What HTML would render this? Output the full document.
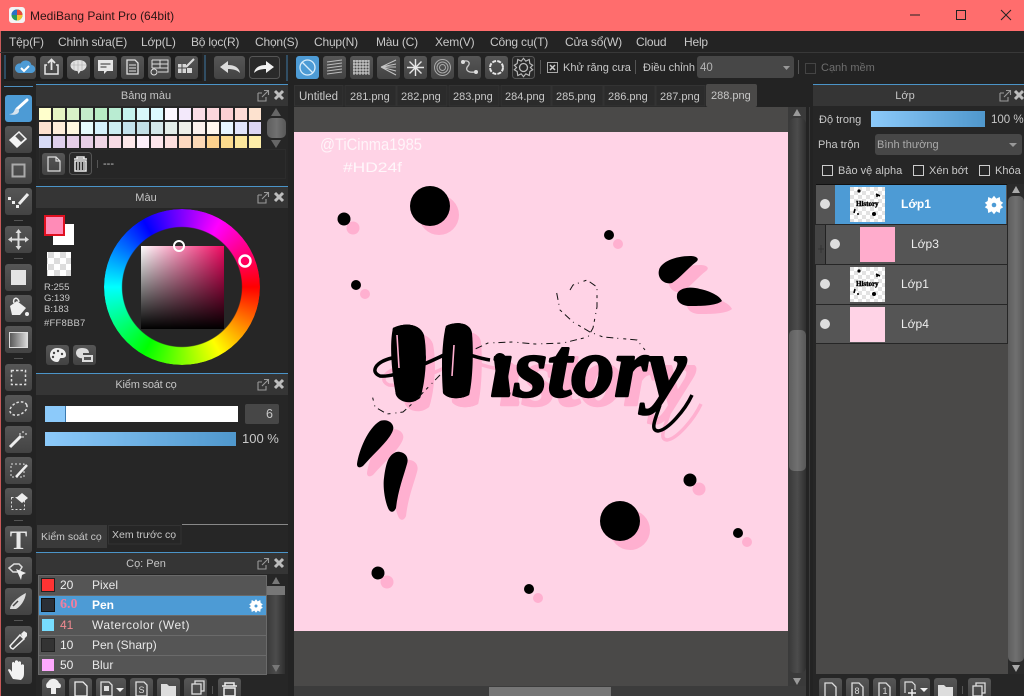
<!DOCTYPE html>
<html><head><meta charset="utf-8"><style>
html,body{margin:0;padding:0;background:#232323}
#w{position:relative;width:1024px;height:696px;overflow:hidden;background:#232323;font-family:"Liberation Sans","Noto Sans CJK SC",sans-serif;font-size:12px;color:#c8c8c8}
.a{position:absolute}
.t{position:absolute;white-space:nowrap;line-height:16px}
.m{letter-spacing:-.2px}
.h{position:absolute;background:#353535;border-top:1px solid #4b94c8;height:21px}
.c{position:absolute;white-space:nowrap;line-height:16px;transform:translateX(-50%);color:#c4c4c4;font-size:11px}
#ic{position:absolute;left:0;top:0}
</style></head><body><div id="w">
<div class="a" style="left:0;top:0;width:1024px;height:31px;background:#ff6d6d"></div>
<div class="a" style="left:0;top:31px;width:1px;height:665px;background:#c85a5a"></div>
<div class="a" style="left:0;top:52px;width:1024px;height:1px;background:#383838"></div>
<div class="a" style="left:4px;top:53px;width:198px;height:28px;background:#1d1d1d"></div>
<div class="a" style="left:36px;top:84px;width:252px;height:612px;background:#262626"></div>
<div class="a" style="left:294px;top:107px;width:512px;height:589px;background:#4a4948"></div>
<div class="a" style="left:813px;top:84px;width:211px;height:612px;background:#262626"></div>
<div class="a" style="left:816px;top:344px;width:192px;height:330px;background:#4a4948"></div>
<div class="a" style="left:294px;top:132px;width:494px;height:499px;background:#ffd3e6"></div>

<div class="h" style="left:36px;top:84px;width:252px"></div>
<div class="h" style="left:36px;top:186px;width:252px"></div>
<div class="h" style="left:36px;top:373px;width:252px"></div>
<div class="h" style="left:36px;top:552px;width:252px"></div>
<div class="h" style="left:813px;top:84px;width:211px"></div>

<div class="a" style="left:104px;top:209px;width:156px;height:156px;border-radius:50%;background:conic-gradient(from 90deg,#f00,#ff0,#0f0,#0ff,#00f,#f0f,#f00);-webkit-mask:radial-gradient(circle,transparent 59.5px,#000 60.5px);mask:radial-gradient(circle,transparent 59.5px,#000 60.5px)"></div>
<div class="a" style="left:141px;top:246px;width:83px;height:83px;background:linear-gradient(to top,#000,rgba(0,0,0,0)),linear-gradient(to right,#fff,#f00a62)"></div>
<div class="a" style="left:173px;top:240px;width:8px;height:8px;border:2px solid #fff;border-radius:50%"></div>

<svg id="ic" width="1024" height="696" viewBox="0 0 1024 696" xmlns="http://www.w3.org/2000/svg" font-family="Liberation Sans">
<defs>
<linearGradient id="b" x1="0" y1="0" x2="0" y2="1"><stop offset="0" stop-color="#565656"/><stop offset="1" stop-color="#434343"/></linearGradient>
<linearGradient id="bl" x1="0" y1="0" x2="1" y2="0"><stop offset="0" stop-color="#8ccafa"/><stop offset="1" stop-color="#4f97cc"/></linearGradient>
<linearGradient id="sb" x1="0" y1="0" x2="1" y2="0"><stop offset="0" stop-color="#3a3a3a"/><stop offset=".5" stop-color="#4c4c4c"/><stop offset="1" stop-color="#2e2e2e"/></linearGradient>
<linearGradient id="th" x1="0" y1="0" x2="1" y2="0"><stop offset="0" stop-color="#5e5e5e"/><stop offset=".5" stop-color="#707070"/><stop offset="1" stop-color="#585858"/></linearGradient>
<linearGradient id="gr" x1="0" y1="0" x2="1" y2="0"><stop offset="0" stop-color="#555"/><stop offset="1" stop-color="#ddd"/></linearGradient>
<pattern id="ck" width="12" height="12" patternUnits="userSpaceOnUse"><rect width="12" height="12" fill="#fff"/><rect width="6" height="6" fill="#dcdcdc"/><rect x="6" y="6" width="6" height="6" fill="#dcdcdc"/></pattern>
<pattern id="ck2" width="8" height="8" patternUnits="userSpaceOnUse"><rect width="8" height="8" fill="#fff"/><rect width="4" height="4" fill="#e2e2e2"/><rect x="4" y="4" width="4" height="4" fill="#e2e2e2"/></pattern>
<g id="pop"><path d="M0 3H4M0 3V11H8V7" fill="none" stroke="#9a9a9a" stroke-width="1.100"/><path d="M4 7L10 1M6 0.500H10.500V5" fill="none" stroke="#9a9a9a" stroke-width="1.100"/></g>
<g id="cl"><path d="M1 1L9 9M9 1L1 9" stroke="#bdbdbd" stroke-width="3"/></g>
<g id="th1"><rect width="35" height="35" fill="url(#ck2)"/><circle cx="9" cy="4" r="1.600"/><circle cx="24" cy="27" r="2"/><circle cx="27" cy="9" r="1"/><circle cx="8" cy="27" r="1"/><text x="6" y="19" font-family="Liberation Serif" font-size="7" font-weight="bold" stroke="#000" stroke-width=".4">History</text><path d="M26 7l4 2M5 22l-1 4" stroke="#000" stroke-width="1.600"/></g>
<path id="gear" d="M0-8 2-5.500 5-7 5.500-3.500 8-2 6 0 8 2 5.500 3.500 5 7 2 5.500 0 8-2 5.500-5 7-5.500 3.500-8 2-6 0-8-2-5.500-3.500-5-7-2-5.500Z"/>
<clipPath id="hc"><path d="M393 328C405 322 420 324 424 335 428 355 425 385 420 398 412 405 400 403 396 395 392 375 389 345 393 328Z"/><path d="M446 326C455 321 470 322 472 333 474 355 472 385 469 395 460 400 447 399 443 393 441 370 442 340 446 326Z"/></clipPath>
<clipPath id="ic2"><path d="M520 300H710V450H480V351H520Z"/></clipPath>
<g id="hist">
<g clip-path="url(#hc)"><text x="388" y="398" font-family="Liberation Serif" font-weight="bold" font-size="112" stroke-width="3" stroke-linejoin="round">H</text></g>
<path d="M393 328C405 322 420 324 424 335 428 355 425 385 420 398 412 405 400 403 396 395 392 375 389 345 393 328Z" stroke="none"/>
<path d="M446 326C455 321 470 322 472 333 474 355 472 385 469 395 460 400 447 399 443 393 441 370 442 340 446 326Z" stroke="none"/>
<g clip-path="url(#ic2)"><text x="490" y="396" font-family="Liberation Serif" font-weight="bold" font-style="italic" font-size="85" stroke-width="2.500" stroke-linejoin="round" textLength="196" lengthAdjust="spacingAndGlyphs">istory</text></g>
<path d="M500 359L504 391" fill="none" stroke-width="12" stroke-linecap="round"/>
<path d="M392 358C375 362 370 372 380 376 395 378 430 362 450 352 460 350 475 358 490 360M660 405C655 420 650 430 658 431 668 430 685 410 692 395" fill="none" stroke-width="3.500"/>
</g>
<path id="s1" d="M357 464C359 450 368 428 380 421 388 418 395 424 393 430 390 440 375 452 363 466 360 468 357 468 357 464Z"/>
<path id="s2" d="M388 460C391 454 396 451 400 452 406 453 409 458 407 464 404 475 398 490 396 508 394 513 390 513 388 508 384 498 383 485 384 478 385 470 386 465 388 460Z"/>
<path id="s3" d="M659 270C661 262 675 256 690 256 697 256 700 259 696 262 688 268 680 278 672 283 664 285 657 278 659 270Z"/>
<path id="s4" d="M677 295C678 288 690 286 700 289 710 291 720 296 722 301 716 306 700 306 690 306 682 306 676 302 677 295Z"/>
</defs>

<!-- title -->
<rect x="9" y="7" width="16" height="16" rx="3" fill="#f4f4f4"/><circle cx="17" cy="15" r="5.500" fill="#2a9a5a"/><path d="M17 9.500A5.500 5.500 0 0 1 22.500 15L17 15Z" fill="#e84a3a"/><path d="M17 15L22.500 15A5.500 5.500 0 0 1 17 20.500Z" fill="#f2c230"/><path d="M17 15V9.500A5.500 5.500 0 0 0 11.500 15Z" fill="#2a70c8"/>
<path d="M910 15H920" stroke="#222" stroke-width="1"/><rect x="956.500" y="10.500" width="9" height="9" fill="none" stroke="#222"/><path d="M1001 10L1011 20M1011 10L1001 20" stroke="#222"/>

<!-- toolbar buttons -->
<g fill="url(#b)">
<rect x="13" y="56" width="23" height="23" rx="3"/><rect x="40" y="56" width="23" height="23" rx="3"/><rect x="67" y="56" width="23" height="23" rx="3"/><rect x="94" y="56" width="23" height="23" rx="3"/><rect x="121" y="56" width="23" height="23" rx="3"/><rect x="148" y="56" width="23" height="23" rx="3"/><rect x="175" y="56" width="23" height="23" rx="3"/>
<rect x="214" y="56" width="31" height="23" rx="3"/>
<rect x="323" y="56" width="23" height="23" rx="3"/><rect x="350" y="56" width="23" height="23" rx="3"/><rect x="377" y="56" width="23" height="23" rx="3"/><rect x="404" y="56" width="23" height="23" rx="3"/><rect x="431" y="56" width="23" height="23" rx="3"/><rect x="458" y="56" width="23" height="23" rx="3"/><rect x="485" y="56" width="23" height="23" rx="3"/>
</g>
<rect x="697" y="56" width="97" height="22" rx="3" fill="#474747"/>
<rect x="249.500" y="56.500" width="30" height="22" rx="3" fill="#2a2a2a" stroke="#555"/>
<rect x="512.500" y="56.500" width="22" height="22" rx="3" fill="#2a2a2a" stroke="#555"/>
<rect x="296" y="56" width="23" height="23" rx="3" fill="#4d9bd5"/>
<path d="M5 55V79M205 55V81M287 55V81" stroke="#3f7aa5" stroke-width="1"/>
<path d="M540.500 60V74M635.500 60V74M798.500 60V74" stroke="#555"/>
<!-- cloud -->
<path d="M19 73H31a4 4 0 0 0 .5-8 6 6 0 0 0-11-1.500A4.800 4.800 0 0 0 19 73Z" fill="#4d9bd5"/><path d="M21 68l3 3 5-5" fill="none" stroke="#fff" stroke-width="2"/>
<!-- share -->
<path d="M47 65H45V74H58V65H56" fill="none" stroke="#e6e6e6" stroke-width="1.500"/><path d="M51.500 70V60M48 63l3.500-3.500L55 63" fill="none" stroke="#e6e6e6" stroke-width="1.800"/>
<!-- bubble -->
<path d="M78.500 60c5.500 0 8 2.500 8 5.500 0 3-3 5.500-6 5.500l-2 3-1-3c-4 0-7-2.500-7-5.500 0-3 3-5.500 8-5.500Z" fill="#e2e2e2"/><path d="M74 62v8M78 60v11M82 61v9M71 65h15" stroke="#aaa" stroke-width=".6"/>
<path d="M98 60H113V71H107L104 74V71H98Z" fill="#e6e6e6"/><path d="M100.500 64H110.500M100.500 67H106.500" stroke="#555" stroke-width="1.300"/>
<path d="M127 60H135L138 63V74H127Z" fill="none" stroke="#e2e2e2" stroke-width="1.300"/><path d="M129 65H136M129 68H136M129 71H136" stroke="#e2e2e2"/>
<path d="M152 60H168V72H158M152 60V68M152 64H168M152 68H168M160 60V68" fill="none" stroke="#ddd"/><circle cx="154" cy="72" r="3" fill="none" stroke="#ddd"/>
<path d="M178 64H186V73H178ZM187 68H192V73H187Z" fill="#d6d6d6"/><path d="M178 68H186M182 64V73" stroke="#444"/><path d="M186 67L194 59" stroke="#ddd" stroke-width="2"/>
<!-- undo redo -->
<path d="M220 67l8-6v4c6 0 11 2 12 8-3-3-7-4-12-4v4Z" fill="#ddd"/><path d="M274 67l-8-6v4c-6 0-11 2-12 8 3-3 7-4 12-4v4Z" fill="#f2f2f2"/>
<!-- snap icons -->
<circle cx="307.500" cy="67.500" r="7.500" fill="none" stroke="#d8ecfa" stroke-width="1.300"/><path d="M302 62L313 73" stroke="#d8ecfa" stroke-width="1.300"/>
<path d="M327 62l15-2M327 65l15-2M327 68l15-2M327 71l15-2M327 74l15-2" stroke="#bbb" stroke-width="1.100"/>
<path d="M354 60v15M357 60v15M360 60v15M363 60v15M366 60v15M369 60v15M353 61h16M353 64h16M353 67h16M353 70h16M353 73h16" stroke="#ddd" stroke-width=".9"/>
<path d="M381 67L396 60M381 67L396 64M381 67H396M381 67L396 71M381 67L396 75" stroke="#c4c4c4"/>
<path d="M415.500 59v17M407 67.500h17M409.500 61.500l12 12M421.500 61.500l-12 12" stroke="#e6e6e6" stroke-width="1.400"/>
<circle cx="442.500" cy="67.500" r="8" fill="none" stroke="#aaa"/><circle cx="442.500" cy="67.500" r="5.500" fill="none" stroke="#aaa"/><circle cx="442.500" cy="67.500" r="3" fill="none" stroke="#aaa"/>
<path d="M462 62c6-3 9 1 6 4-2 2-2 5 2 6 2 .5 4 0 6 0" fill="none" stroke="#ccc" stroke-width="1.300"/><circle cx="463" cy="62" r="2" fill="#ddd"/><circle cx="476" cy="72" r="2" fill="#ddd"/>
<circle cx="496.500" cy="67.500" r="6.500" fill="none" stroke="#e6e6e6" stroke-width="2" stroke-dasharray="4 1.200"/>
<circle cx="523.500" cy="67.500" r="4" fill="none" stroke="#bbb" stroke-width="1.300"/><use href="#gear" transform="translate(523.500 67.500) scale(1.150)" fill="none" stroke="#bbb"/>
<rect x="547.500" y="62.500" width="10" height="10" fill="none" stroke="#aaa"/><path d="M550 65l5 5M555 65l-5 5" stroke="#ccc" stroke-width="1.500"/>
<rect x="805.500" y="63.500" width="10" height="10" fill="none" stroke="#444"/>
<path d="M783 66h7l-3.500 4Z" fill="#999"/>

<!-- tool buttons -->
<path d="M4 86.500H33" stroke="#4d8fbf"/>
<g fill="url(#b)">
<rect x="5" y="126" width="27" height="27" rx="3"/><rect x="5" y="157" width="27" height="27" rx="3"/><rect x="5" y="188" width="27" height="27" rx="3"/><rect x="5" y="226" width="27" height="27" rx="3"/><rect x="5" y="264" width="27" height="27" rx="3"/><rect x="5" y="295" width="27" height="27" rx="3"/><rect x="5" y="326" width="27" height="27" rx="3"/><rect x="5" y="364" width="27" height="27" rx="3"/><rect x="5" y="395" width="27" height="27" rx="3"/><rect x="5" y="426" width="27" height="27" rx="3"/><rect x="5" y="457" width="27" height="27" rx="3"/><rect x="5" y="488" width="27" height="27" rx="3"/><rect x="5" y="526" width="27" height="27" rx="3"/><rect x="5" y="557" width="27" height="27" rx="3"/><rect x="5" y="588" width="27" height="27" rx="3"/><rect x="5" y="626" width="27" height="27" rx="3"/><rect x="5" y="657" width="27" height="27" rx="3"/>
</g>
<rect x="5" y="95" width="27" height="27" rx="3" fill="#4d9bd5"/>
<path d="M14 220.500h9M14 258.500h9M14 358.500h9M14 520.500h9M14 620.500h9" stroke="#555"/>
<path d="M17 109L27 100" stroke="#fff" stroke-width="3" stroke-linecap="round"/><path d="M9 114c4 0 5-2 6-5 2-1 4 0 4 2 0 3-5 5-10 3Z" fill="#d8e4ee"/>
<path d="M10 140l9-8 7 7-9 8Z" fill="#f4f4f4"/><path d="M15 136l4-3.500 6 6-4 3.500Z" fill="#555"/><path d="M10 140l9-8 7 7-9 8Z" fill="none" stroke="#f4f4f4" stroke-width="1.500"/>
<rect x="12.500" y="164.500" width="12" height="12" fill="none" stroke="#aaa" stroke-width="2"/>
<path d="M19 204L28 194" stroke="#eee" stroke-width="3"/><path d="M8 197h3v3H8ZM12 201h3v3h-3ZM16 205h3v3h-3Z" fill="#eee"/>
<path d="M18.500 231v17M10 239.500h17" stroke="#ddd" stroke-width="2"/><path d="M18.500 229l-3 4h6ZM18.500 250l-3-4h6ZM8 239.500l4-3v6ZM29 239.500l-4-3v6Z" fill="#ddd"/>
<rect x="11" y="270" width="15" height="15" fill="#e4e4e4"/>
<path d="M10 306l7-5 9 7-6 7h-8Z" fill="#eee"/><path d="M14 303c-2-5 4-7 5-1" fill="none" stroke="#eee" stroke-width="1.500"/><circle cx="27" cy="314" r="2" fill="#eee"/>
<rect x="9.500" y="332.500" width="18" height="15" fill="url(#gr)" stroke="#ddd"/>
<rect x="11.500" y="370.500" width="14" height="14" fill="none" stroke="#ddd" stroke-width="1.500" stroke-dasharray="2.500 2"/>
<ellipse cx="18.500" cy="408.500" rx="9" ry="6" transform="rotate(-25 18.500 408.500)" fill="none" stroke="#ddd" stroke-width="1.500" stroke-dasharray="2.500 2"/>
<path d="M10 447L21 436" stroke="#eee" stroke-width="3"/><path d="M23 431v2M23 436v2M19 434h2M25 434h2" stroke="#eee"/>
<rect x="11" y="464" width="13" height="13" fill="none" stroke="#ddd" stroke-dasharray="2 2"/><path d="M16 477L27 465" stroke="#eee" stroke-width="2.500"/>
<rect x="11.500" y="497.500" width="13" height="12" fill="none" stroke="#ddd" stroke-dasharray="2 2"/><path d="M16 498l6-5 6 5-6 5Z" fill="#eee"/>
<text x="18.500" y="549" font-family="Liberation Serif" font-size="26" font-weight="bold" fill="#e8e8e8" text-anchor="middle">T</text>
<path d="M9 568l5-4h5l3 3-3 5h-6Z" fill="none" stroke="#ddd" stroke-width="1.500"/><path d="M16 569l10 4-4 2-1 5Z" fill="#eee"/>
<path d="M10 609c0-5 8-12 16-16-1 8-6 14-10 16Z" fill="#ddd"/><path d="M13 606l5-5" stroke="#444" stroke-width="1.500"/>
<path d="M11 648l-1-2 10-11 4 4-11 10Z" fill="none" stroke="#eee" stroke-width="1.500"/><path d="M21 634l3-3 3 2 0 3-3 3Z" fill="#eee"/>
<path d="M13 679c-2-3-4-7-5-9 1-2 3 0 4 2V663c1-2 2-1 3 0v6-8c1-1 2-1 3 0v8-7c1-1 2-1 3 0v8-5c1-1 2-1 3 0v8c0 4-1 5-3 7Z" fill="#f2f2f2"/>

<!-- header icons -->
<use href="#pop" x="258" y="90"/><use href="#cl" x="274" y="90"/>
<use href="#pop" x="258" y="192"/><use href="#cl" x="274" y="192"/>
<use href="#pop" x="258" y="379"/><use href="#cl" x="274" y="379"/>
<use href="#pop" x="258" y="558"/><use href="#cl" x="274" y="558"/>
<use href="#pop" x="1000" y="90"/><use href="#cl" x="1014" y="90"/>

<!-- palette -->
<g>
<rect x="39" y="108" width="12" height="12" fill="#ffffcc"/><rect x="53" y="108" width="12" height="12" fill="#e5f5c4"/><rect x="67" y="108" width="12" height="12" fill="#d8f2c8"/><rect x="81" y="108" width="12" height="12" fill="#c5eccb"/><rect x="95" y="108" width="12" height="12" fill="#b8ecc4"/><rect x="109" y="108" width="12" height="12" fill="#b9ecd2"/><rect x="123" y="108" width="12" height="12" fill="#c5f3ee"/><rect x="137" y="108" width="12" height="12" fill="#d8f8fa"/><rect x="151" y="108" width="12" height="12" fill="#dcfaff"/><rect x="165" y="108" width="12" height="12" fill="#fdf8ff"/><rect x="179" y="108" width="12" height="12" fill="#f3e9fb"/><rect x="193" y="108" width="12" height="12" fill="#fadde6"/><rect x="207" y="108" width="12" height="12" fill="#fbd7dc"/><rect x="221" y="108" width="12" height="12" fill="#fbcfd3"/><rect x="235" y="108" width="12" height="12" fill="#fddbd6"/><rect x="249" y="108" width="12" height="12" fill="#fde2cf"/>
<rect x="39" y="122" width="12" height="12" fill="#fde2d0"/><rect x="53" y="122" width="12" height="12" fill="#feeeda"/><rect x="67" y="122" width="12" height="12" fill="#fff8e0"/><rect x="81" y="122" width="12" height="12" fill="#e6fbfb"/><rect x="95" y="122" width="12" height="12" fill="#d5f2fb"/><rect x="109" y="122" width="12" height="12" fill="#cdeef2"/><rect x="123" y="122" width="12" height="12" fill="#c4e3ec"/><rect x="137" y="122" width="12" height="12" fill="#c3e0e6"/><rect x="151" y="122" width="12" height="12" fill="#d5e8ea"/><rect x="165" y="122" width="12" height="12" fill="#e4eeea"/><rect x="179" y="122" width="12" height="12" fill="#eeefe8"/><rect x="193" y="122" width="12" height="12" fill="#fbf1ec"/><rect x="207" y="122" width="12" height="12" fill="#fff8ee"/><rect x="221" y="122" width="12" height="12" fill="#e8f6ff"/><rect x="235" y="122" width="12" height="12" fill="#e2e6fb"/><rect x="249" y="122" width="12" height="12" fill="#dcd6f3"/>
<rect x="39" y="136" width="12" height="12" fill="#d8dcf7"/><rect x="53" y="136" width="12" height="12" fill="#dfd0ec"/><rect x="67" y="136" width="12" height="12" fill="#e6cfe8"/><rect x="81" y="136" width="12" height="12" fill="#e8cfe6"/><rect x="95" y="136" width="12" height="12" fill="#f0d6e6"/><rect x="109" y="136" width="12" height="12" fill="#f8dce6"/><rect x="123" y="136" width="12" height="12" fill="#fde8ea"/><rect x="137" y="136" width="12" height="12" fill="#fdf0fa"/><rect x="151" y="136" width="12" height="12" fill="#fee6ec"/><rect x="165" y="136" width="12" height="12" fill="#fddfde"/><rect x="179" y="136" width="12" height="12" fill="#fdd9c0"/><rect x="193" y="136" width="12" height="12" fill="#fdd9b6"/><rect x="207" y="136" width="12" height="12" fill="#fdd28e"/><rect x="221" y="136" width="12" height="12" fill="#fddc8e"/><rect x="235" y="136" width="12" height="12" fill="#fde89c"/><rect x="249" y="136" width="12" height="12" fill="#fdeda8"/>
</g>
<path d="M276 108l-5 8h10Z" fill="#666"/><rect x="267" y="118" width="19" height="20" rx="5" fill="url(#th)"/><path d="M276 148l-5-8h10Z" fill="#666"/>
<rect x="39.500" y="149.500" width="246" height="29" fill="none" stroke="#333" stroke-dasharray="1 1"/>
<rect x="42" y="153" width="23" height="22" rx="3" fill="url(#b)"/><path d="M48 157H56L60 161V171H48ZM56 157V161H60" fill="none" stroke="#ddd" stroke-width="1.200"/>
<rect x="69.500" y="152.500" width="22" height="22" rx="3" fill="#2a2a2a" stroke="#555"/><path d="M74 159H87M77 159V157H84V159M75 161V171H86V161Z" fill="none" stroke="#eee" stroke-width="1.500"/><path d="M78 162V170M81 162V170M84 162V170" stroke="#eee" stroke-width="1.300"/>
<path d="M97.500 160v8" stroke="#555"/>

<!-- colour -->
<rect x="53" y="224" width="21" height="21" fill="#fff"/><rect x="45" y="216" width="19" height="19" fill="#ff8bb7" stroke="#e01020" stroke-width="2"/>
<rect x="47" y="252" width="24" height="24" fill="url(#ck)"/>
<circle cx="245" cy="261" r="5.500" fill="none" stroke="#fff" stroke-width="2.500"/>
<rect x="46" y="345" width="23" height="20" rx="3" fill="url(#b)"/><rect x="73" y="345" width="23" height="20" rx="3" fill="url(#b)"/>
<path d="M57 348c6 0 9 3 9 7 0 3-3 3-5 3-2 0-1 4-4 4-4 0-7-3-7-7s3-7 7-7Z" fill="#eee"/><circle cx="54" cy="353" r="1.200" fill="#444"/><circle cx="58" cy="351" r="1.200" fill="#444"/><circle cx="62" cy="354" r="1.200" fill="#444"/><circle cx="53" cy="357" r="1.200" fill="#444"/>
<path d="M82 348c5 0 7 2 7 5h-6v5c-4 1-7-2-7-5s2-5 6-5Z" fill="#ddd"/><rect x="82" y="355" width="11" height="7" fill="#ddd"/><rect x="84" y="357" width="7" height="3" fill="#555"/>

<!-- brush control -->
<rect x="45" y="406" width="193" height="16" fill="#fff"/><rect x="45" y="406" width="20" height="16" fill="#8ccafa"/><path d="M65.500 406V422" stroke="#3a7ab0"/>
<rect x="245" y="404" width="34" height="20" rx="2" fill="#474747"/>
<rect x="45" y="432" width="191" height="14" fill="url(#bl)"/>
<path d="M182 524.500H288" stroke="#888"/>
<path d="M37 525H107V548H37Z" fill="#3a3a3a"/><path d="M108.500 525.500H181V544H108.500Z" fill="#262626" stroke="#333"/>

<!-- brush list -->
<rect x="38" y="575" width="229" height="100" fill="#6a6a6a"/>
<rect x="39" y="576" width="227" height="19" fill="#555"/><rect x="39" y="596" width="227" height="19" fill="#4d9bd5"/><rect x="39" y="616" width="227" height="19" fill="#555"/><rect x="39" y="636" width="227" height="19" fill="#555"/><rect x="39" y="656" width="227" height="18" fill="#555"/>
<rect x="41.500" y="578.500" width="13" height="13" fill="#ff3333" stroke="#222"/>
<rect x="41.500" y="598.500" width="13" height="13" fill="#2b2f36" stroke="#111"/>
<rect x="41.500" y="618.500" width="13" height="13" fill="#77ddff" stroke="#555"/>
<rect x="41.500" y="638.500" width="13" height="13" fill="#333" stroke="#222"/>
<rect x="41.500" y="658.500" width="13" height="13" fill="#ffaaff" stroke="#555"/>
<use href="#gear" transform="translate(256 606) scale(.85)" fill="#fff"/><circle cx="256" cy="606" r="1.500" fill="#4d9bd5"/>
<rect x="267" y="586" width="18" height="88" fill="url(#sb)"/><rect x="267" y="586" width="18" height="9" fill="#777"/>
<path d="M276 577l-4 7h8ZM276 672l-4-7h8Z" fill="#777"/>
<g fill="url(#b)"><rect x="42" y="678" width="23" height="20" rx="3"/><rect x="69" y="678" width="23" height="20" rx="3"/><rect x="96" y="678" width="30" height="20" rx="3"/><rect x="130" y="678" width="23" height="20" rx="3"/><rect x="157" y="678" width="23" height="20" rx="3"/><rect x="184" y="678" width="23" height="20" rx="3"/><rect x="218" y="678" width="23" height="20" rx="3"/></g>
<path d="M47 688a4 4 0 0 1 1-6 6 6 0 0 1 11 1 3 3 0 0 1 1 5h-4v6h-5v-6Z" fill="#eee"/>
<path d="M75 682H83L87 686V696H75Z" fill="none" stroke="#eee" stroke-width="1.300"/>
<path d="M101 682H109L112 685V696H101Z" fill="none" stroke="#ddd" stroke-width="1.300"/><rect x="104" y="686" width="5" height="5" fill="#ddd"/><path d="M116 688h8l-4 4Z" fill="#eee"/>
<path d="M136 682H144L147 685V696H136Z" fill="none" stroke="#ddd" stroke-width="1.300"/><text x="141.500" y="693" font-size="9" fill="#ddd" text-anchor="middle">S</text>
<path d="M161 684h6l2 2h7v10h-15Z" fill="#ddd"/>
<rect x="192" y="684" width="9" height="10" fill="none" stroke="#ddd" stroke-width="1.300"/><path d="M195 684v-3h9v10h-3" fill="none" stroke="#ddd" stroke-width="1.300"/>
<path d="M212.500 686v8" stroke="#555"/>
<path d="M222 686H237M225 686V683H234V686M224 688V696H235V688Z" fill="none" stroke="#eee" stroke-width="1.500"/>

<!-- tabs -->
<g fill="#2b2b2b" stroke="#333"><path d="M294.500 85.500H343V106H294.500ZM345 85.500H396V106H345ZM397 85.500H447V106H397ZM449 85.500H499V106H449ZM501 85.500H551V106H501ZM552 85.500H603V106H552ZM604 85.500H655V106H604ZM656 85.500H705V106H656Z"/></g>
<rect x="706" y="84" width="51" height="23" rx="2" fill="#4a4948"/>

<!-- scrollbars -->
<rect x="788" y="107" width="18" height="579" fill="#3a3a3a"/>
<rect x="789" y="118" width="17" height="555" rx="6" fill="url(#sb)"/>
<rect x="789" y="330" width="17" height="141" rx="5" fill="url(#th)"/>
<path d="M797 109l-4 7h8ZM797 685l-4-7h8Z" fill="#9a9a9a"/>
<rect x="294" y="686" width="512" height="10" fill="#3c3c3c"/><rect x="489" y="687" width="122" height="9" fill="#767676"/>
<path d="M809.500 107V696" stroke="#3a3a3a"/>
<rect x="1008" y="184" width="16" height="490" fill="#2a2a2a"/>
<rect x="1008" y="196" width="16" height="466" rx="5" fill="url(#th)"/>
<path d="M1016 186l-4 7h8ZM1016 672l-4-7h8Z" fill="#aaa"/>

<!-- layer panel -->
<rect x="871" y="111" width="114" height="16" fill="url(#bl)"/>
<rect x="875" y="134" width="147" height="21" rx="3" fill="#474747"/><path d="M1009 143h8l-4 4Z" fill="#999"/>
<g fill="none" stroke="#ccc"><rect x="822.500" y="165.500" width="10" height="10"/><rect x="913.500" y="165.500" width="10" height="10"/><rect x="979.500" y="165.500" width="10" height="10"/></g>
<path d="M816 184.500H1007" stroke="#111"/>
<rect x="816" y="185" width="191" height="39" fill="#555"/><rect x="835" y="185" width="171" height="39" fill="#4d9bd5"/>
<rect x="815" y="225" width="192" height="39" fill="#555"/><rect x="815" y="225" width="10" height="39" fill="#444"/><path d="M825.500 225V264" stroke="#222"/>
<rect x="816" y="265" width="191" height="39" fill="#555"/><rect x="816" y="305" width="191" height="38" fill="#555"/>
<path d="M818 249h6M821 245v8" stroke="#333"/>
<g fill="#ddd"><circle cx="825" cy="204" r="5"/><circle cx="835" cy="244" r="5"/><circle cx="825" cy="284" r="5"/><circle cx="825" cy="324" r="5"/></g>
<use href="#th1" x="850" y="187"/><use href="#th1" x="850" y="267"/>
<rect x="860" y="227" width="35" height="35" fill="#ffaccc"/>
<rect x="850" y="307" width="35" height="35" fill="#ffd3e6"/>
<use href="#gear" transform="translate(994 205) scale(1.150)" fill="#fff"/><circle cx="994" cy="205" r="2.300" fill="#4d9bd5"/>
<g fill="url(#b)"><rect x="819" y="678" width="23" height="20" rx="3"/><rect x="846" y="678" width="23" height="20" rx="3"/><rect x="873" y="678" width="23" height="20" rx="3"/><rect x="900" y="678" width="30" height="20" rx="3"/><rect x="934" y="678" width="23" height="20" rx="3"/><rect x="968" y="678" width="23" height="20" rx="3"/></g>
<path d="M825 683H832L836 687V697H825Z" fill="none" stroke="#ddd" stroke-width="1.300"/>
<path d="M852 683H859L863 687V697H852Z" fill="none" stroke="#ddd" stroke-width="1.300"/><text x="857" y="694" font-size="9" fill="#ddd" text-anchor="middle">8</text>
<path d="M879 683H886L890 687V697H879Z" fill="none" stroke="#ddd" stroke-width="1.300"/><text x="885" y="694" font-size="9" fill="#ddd" text-anchor="middle">1</text>
<path d="M905 693V682H912L915 685V690" fill="none" stroke="#ddd" stroke-width="1.200"/><path d="M912 689v8M908 693h8" stroke="#eee" stroke-width="1.500"/><path d="M920 688h8l-4 4Z" fill="#eee"/>
<path d="M938 685h6l2 2h7v10h-15Z" fill="#ddd"/>
<path d="M962.500 686v8" stroke="#555"/>
<rect x="973" y="686" width="9" height="10" fill="none" stroke="#ddd" stroke-width="1.300"/><path d="M976 686v-3h9v10h-3" fill="none" stroke="#ddd" stroke-width="1.300"/>

<!-- artwork -->
<g fill="#ffb0d0" stroke="none">
<circle cx="353" cy="228" r="6.500"/><circle cx="439" cy="215" r="20"/><circle cx="618" cy="244" r="5"/><circle cx="365" cy="294" r="5"/><circle cx="699" cy="489" r="6.500"/><circle cx="630" cy="530" r="20"/><circle cx="747" cy="542" r="5"/><circle cx="387" cy="582" r="6.500"/><circle cx="538" cy="598" r="5"/>
<use href="#s1" x="10" y="9"/><use href="#s2" x="10" y="8"/><use href="#s3" x="10" y="9"/><use href="#s4" x="10" y="8"/>
</g>
<use href="#hist" x="9" y="9" fill="#ffb0d0" stroke="#ffb0d0"/>
<g fill="#000" stroke="none">
<circle cx="344" cy="219" r="6.500"/><circle cx="430" cy="206" r="20"/><circle cx="609" cy="235" r="5"/><circle cx="356" cy="285" r="5"/><circle cx="690" cy="480" r="6.500"/><circle cx="620" cy="521" r="20"/><circle cx="738" cy="533" r="5"/><circle cx="378" cy="573" r="6.500"/><circle cx="529" cy="589" r="5"/>
<use href="#s1"/><use href="#s2"/><use href="#s3"/><use href="#s4"/>
</g>
<use href="#hist" fill="#000" stroke="#000"/>
<path d="M397 335L399 368M454 345L452 376" stroke="#ffb0d0" stroke-width="1.600" fill="none"/>
<path d="M556.700 293L560 310 573 322 590 332 603 337 637 340 645 350M570 290L573 285 587 280 597 287 597 307 593 328 588 337 563 343 535 344 513 342 488 343 473 350M440 375L413 403 403 412 387 414 375 407 372 395" fill="none" stroke="#111" stroke-width="1" stroke-dasharray="7 4 1 5 3 4"/>
<text x="320" y="150" font-size="17" fill="#fff" fill-opacity=".75" textLength="102" lengthAdjust="spacingAndGlyphs">@TiCinma1985</text>
<text x="343" y="172" font-size="14" fill="#fff" fill-opacity=".8" textLength="59" lengthAdjust="spacingAndGlyphs">#HD24f</text>
</svg>

<div class="t" style="left:30px;top:8px;font-size:12px;color:#2a1515">MediBang Paint Pro (64bit)</div>
<div class="t m" style="left:9px;top:34px">Tệp(F)</div><div class="t m" style="left:58px;top:34px">Chỉnh sửa(E)</div><div class="t m" style="left:141px;top:34px">Lớp(L)</div><div class="t m" style="left:191px;top:34px">Bộ lọc(R)</div><div class="t m" style="left:255px;top:34px">Chọn(S)</div><div class="t m" style="left:314px;top:34px">Chụp(N)</div><div class="t m" style="left:376px;top:34px">Màu (C)</div><div class="t m" style="left:435px;top:34px">Xem(V)</div><div class="t m" style="left:490px;top:34px">Công cụ(T)</div><div class="t m" style="left:565px;top:34px">Cửa sổ(W)</div><div class="t m" style="left:636px;top:34px">Cloud</div><div class="t m" style="left:684px;top:34px">Help</div>

<div class="t" style="left:563px;top:60px;font-size:11px">Khử răng cưa</div>
<div class="t" style="left:643px;top:60px;font-size:11px">Điều chỉnh</div>
<div class="t" style="left:700px;top:60px;font-size:11.500px;color:#b4b4b4">40</div>
<div class="t" style="left:821px;top:60px;font-size:11px;color:#6e6e6e">Cạnh mềm</div>

<div class="t" style="left:299px;top:89px;font-size:11.500px">Untitled</div><div class="t" style="left:350px;top:89px;font-size:11px">281.png</div><div class="t" style="left:401px;top:89px;font-size:11px">282.png</div><div class="t" style="left:453px;top:89px;font-size:11px">283.png</div><div class="t" style="left:505px;top:89px;font-size:11px">284.png</div><div class="t" style="left:556px;top:89px;font-size:11px">285.png</div><div class="t" style="left:608px;top:89px;font-size:11px">286.png</div><div class="t" style="left:660px;top:89px;font-size:11px">287.png</div><div class="t" style="left:711px;top:88px;font-size:11px">288.png</div>

<div class="c" style="left:146px;top:88px">Bảng màu</div>
<div class="t" style="left:103px;top:156px;font-size:11px">---</div>
<div class="c" style="left:146px;top:190px">Màu</div>
<div class="t" style="left:44px;top:280px;font-size:9.500px">R:255</div>
<div class="t" style="left:44px;top:291px;font-size:9.500px">G:139</div>
<div class="t" style="left:44px;top:302px;font-size:9.500px">B:183</div>
<div class="t" style="left:44px;top:316px;font-size:9.500px;letter-spacing:.2px">#FF8BB7</div>
<div class="c" style="left:146px;top:377px;letter-spacing:-.2px">Kiểm soát cọ</div>
<div class="t" style="right:751px;top:406px;font-size:12.500px">6</div>
<div class="t" style="left:242px;top:431px;font-size:13px">100 %</div>
<div class="t" style="left:41px;top:529px;font-size:10.500px">Kiểm soát cọ</div>
<div class="t" style="left:112px;top:527px;font-size:10.500px">Xem trước cọ</div>
<div class="c" style="left:146px;top:556px">Cọ: Pen</div>

<div class="t" style="left:60px;top:577px;color:#eee">20</div><div class="t" style="left:92px;top:577px;color:#e8e8e8">Pixel</div>
<div class="t" style="left:60px;top:597px;color:#ee7fa0;font-weight:bold;font-size:14px;font-family:'Liberation Serif',serif">6.0</div><div class="t" style="left:92px;top:597px;color:#fff;font-weight:bold">Pen</div>
<div class="t" style="left:60px;top:617px;color:#f08a90">41</div><div class="t" style="left:92px;top:617px;color:#e8e8e8;letter-spacing:.5px">Watercolor (Wet)</div>
<div class="t" style="left:60px;top:637px;color:#eee">10</div><div class="t" style="left:92px;top:637px;color:#e8e8e8">Pen (Sharp)</div>
<div class="t" style="left:60px;top:657px;color:#eee">50</div><div class="t" style="left:92px;top:657px;color:#e8e8e8">Blur</div>

<div class="c" style="left:905px;top:88px">Lớp</div>
<div class="t" style="left:819px;top:112px;font-size:11px">Độ trong</div>
<div class="t" style="left:991px;top:112px;font-size:11.500px">100 %</div>
<div class="t" style="left:818px;top:137px;font-size:11px">Pha trộn</div>
<div class="t" style="left:877px;top:137px;font-size:11px;color:#aaa">Bình thường</div>
<div class="t" style="left:838px;top:163px;font-size:11px">Bảo vệ alpha</div>
<div class="t" style="left:929px;top:163px;font-size:11px">Xén bớt</div>
<div class="t" style="left:995px;top:163px;font-size:11px">Khóa</div>
<div class="t" style="left:901px;top:196px;color:#fff;font-weight:bold">Lớp1</div>
<div class="t" style="left:911px;top:236px;color:#eee">Lớp3</div>
<div class="t" style="left:901px;top:276px;color:#eee">Lớp1</div>
<div class="t" style="left:901px;top:316px;color:#eee">Lớp4</div>
</div></body></html>
